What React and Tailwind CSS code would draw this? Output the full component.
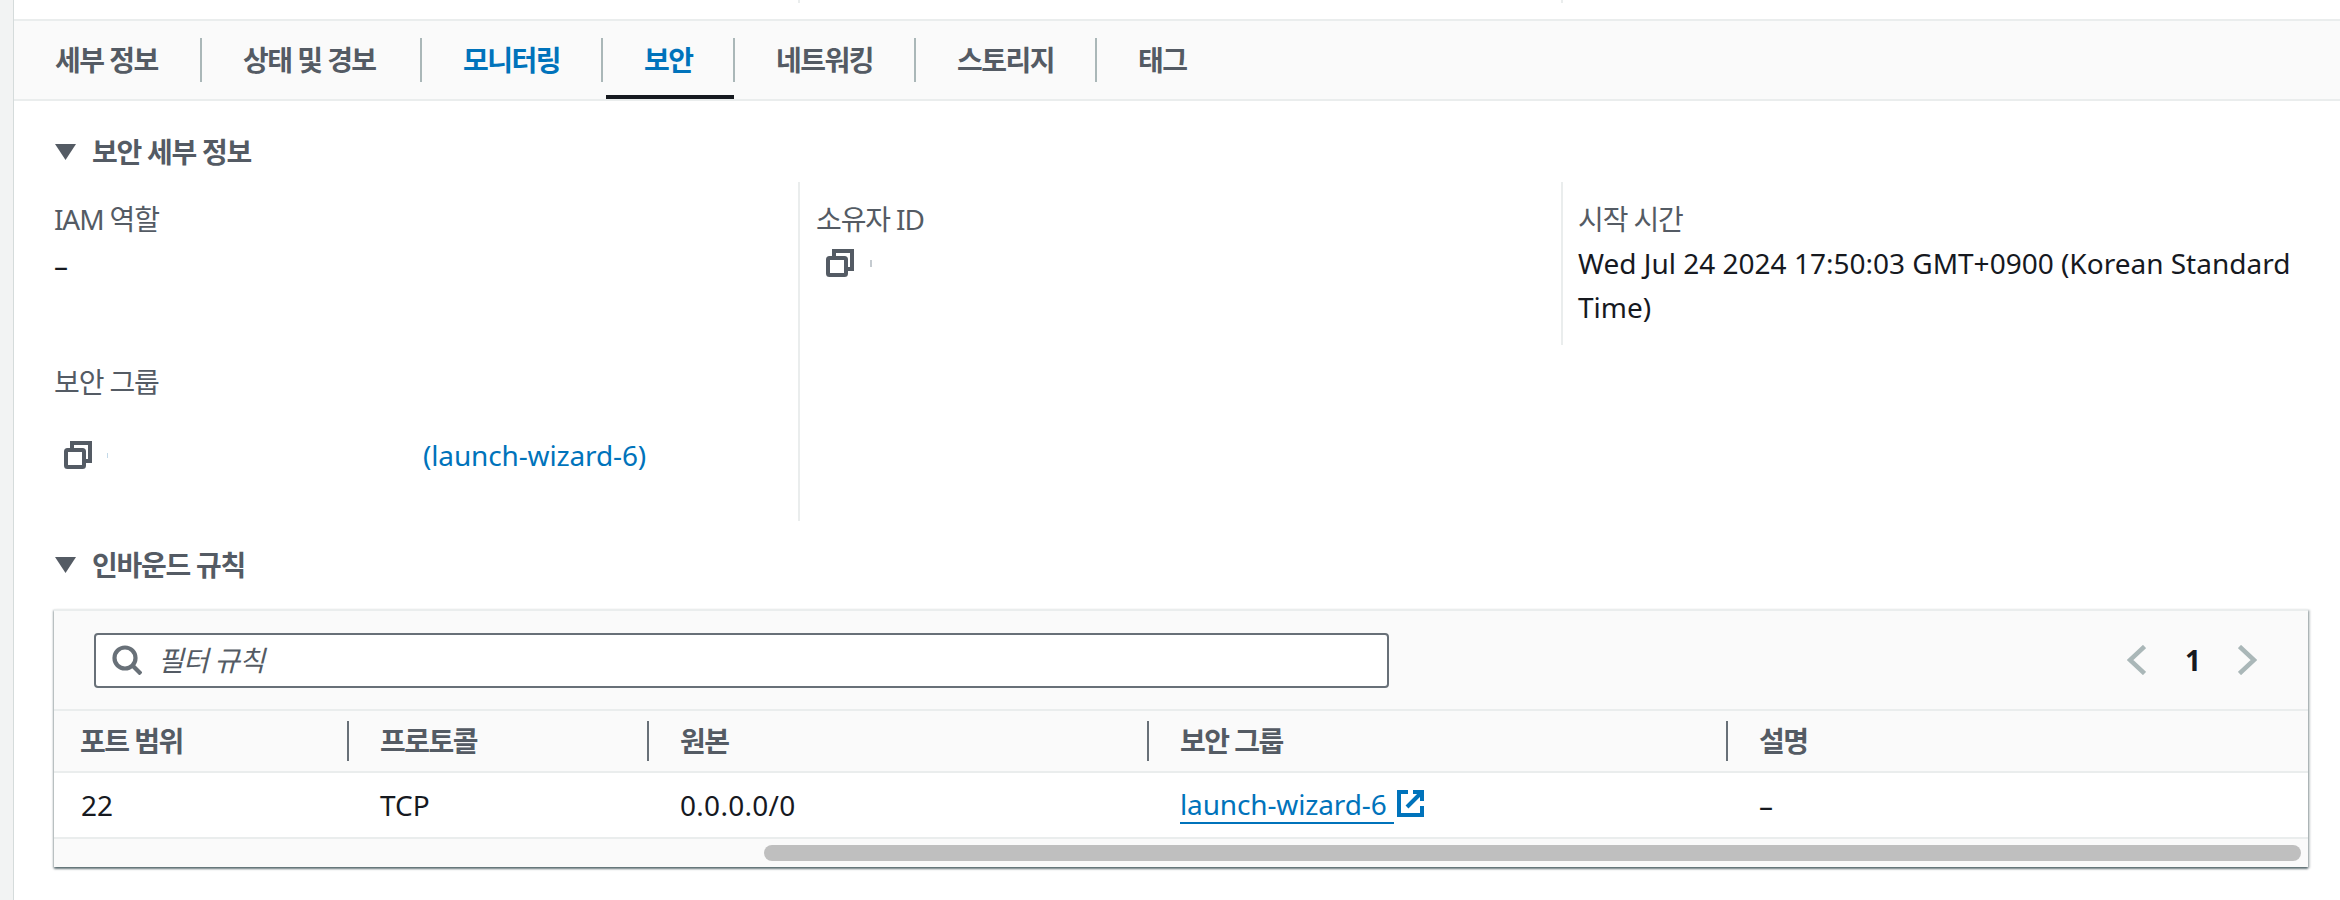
import React from 'react';

const tabs = [
  { label: '세부 정보', width: 'w-[188px]' },
  { label: '상태 및 경보', width: 'w-[220px]' },
  { label: '모니터링', width: 'w-[181px]', blue: true },
  { label: '보안', width: 'w-[132px]', blue: true, active: true },
  { label: '네트워킹', width: 'w-[181px]' },
  { label: '스토리지', width: 'w-[181px]' },
  { label: '태그', width: 'w-[132px]', last: true },
];

const Triangle = () => (
  <svg viewBox="0 0 21 16" className="w-[21px] h-[16px] shrink-0">
    <polygon points="0,0 21,0 10.5,16" fill="#545b64" />
  </svg>
);

const CopyIcon = () => (
  <svg viewBox="0 0 28 28" className="w-[28px] h-[28px] shrink-0" fill="none" stroke="#545b64" strokeWidth="4">
    <rect x="2" y="9" width="18" height="17" rx="1.5" />
    <path d="M8 8V2h18v18h-6" />
  </svg>
);

const Heading = ({ children }) => (
  <div className="flex items-center h-[40px] ml-[41px] gap-[16px]">
    <Triangle />
    <h2 className="text-[28px] font-bold text-[#545b64] tracking-[-0.045em]">{children}</h2>
  </div>
);

const Label = ({ children }) => (
  <div className="h-[40px] leading-[40px] text-[#545b64] tracking-[-0.04em]">{children}</div>
);

export default function App() {
  return (
    <div className="flex w-[2340px] h-[900px] bg-white overflow-hidden text-[28px] text-[#16191f] font-['Noto_Sans','Noto_Sans_CJK_KR',sans-serif]">
      <div className="w-[14px] shrink-0 bg-[#f2f3f3] border-r border-[#d5dbdb]" />
      <div className="flex-1 min-w-0">
        {/* top leftovers of the previous panel */}
        <div className="grid grid-cols-[784px_763px_1fr] h-[19px]">
          <div />
          <div className="h-[3px] border-l-2 border-[#eaeded]" />
          <div className="h-[3px] border-l-2 border-[#eaeded]" />
        </div>

        {/* tabs */}
        <div className="flex h-[82px] bg-[#fafafa] border-y-2 border-[#eaeded]">
          {tabs.map((tab) => (
            <div key={tab.label} className={`relative flex items-center h-full ${tab.width}`}>
              <div className={`flex items-center w-full h-[44px] pl-[41px] font-bold tracking-[-0.055em] whitespace-nowrap ${tab.last ? '' : 'border-r-2 border-[#aab7b8]'} ${tab.blue ? 'text-[#0073bb]' : 'text-[#545b64]'}`}>
                {tab.label}
              </div>
              {tab.active && <div className="absolute left-[3px] right-[1px] bottom-0 h-[4px] bg-[#16191f]" />}
            </div>
          ))}
        </div>

        {/* security details */}
        <div className="mt-[31px]">
          <Heading>보안 세부 정보</Heading>
        </div>
        <div className="grid grid-cols-[744px_763px_1fr] mt-[10px] ml-[40px] mr-[32px]">
          <div className="pt-[17px] pb-[44px]">
            <Label>IAM 역할</Label>
            <div className="mt-[6px] h-[40px] leading-[40px]">–</div>
            <div className="mt-[77px]">
              <Label>보안 그룹</Label>
            </div>
            <div className="flex items-center h-[44px] mt-[31px] ml-[10px]">
              <CopyIcon />
              <span className="ml-[15px] w-[1px] h-[5px] bg-[#c3d9e8]" />
              <a className="ml-[315px] text-[#0073bb] tracking-[-0.005em]">(launch-wizard-6)</a>
            </div>
          </div>
          <div className="border-l-2 border-[#eaeded] pt-[17px] pl-[16px]">
            <Label>소유자 ID</Label>
            <div className="flex items-center h-[44px] mt-[2px] ml-[10px]">
              <CopyIcon />
              <span className="ml-[16px] w-[2px] h-[7px] bg-[#c5cbd0]" />
            </div>
          </div>
          <div className="self-start border-l-2 border-[#eaeded] pt-[17px] pb-[16px] pl-[15px]">
            <Label>시작 시간</Label>
            <div className="mt-[2px] leading-[44px]">Wed Jul 24 2024 17:50:03 GMT+0900 (Korean Standard Time)</div>
          </div>
        </div>

        {/* inbound rules */}
        <div className="mt-[24px]">
          <Heading>인바운드 규칙</Heading>
        </div>
        <div className="mt-[24px] ml-[40px] mr-[32px] border-t-2 border-[#eaeded] bg-white shadow-[0_2px_2px_0_rgba(0,28,36,0.5),2px_1px_2px_0_rgba(0,28,36,0.2),-1px_1px_2px_0_rgba(0,28,36,0.2)]">
          <div className="flex items-center justify-between h-[100px] pl-[40px] pr-[51px] bg-[#fafafa] border-b-2 border-[#eaeded]">
            <div className="flex items-center w-[1295px] h-[55px] pl-[16px] bg-white border-2 border-[#687078] rounded-[4px]">
              <svg viewBox="0 0 30 30" className="w-[30px] h-[30px] shrink-0" fill="none" stroke="#687078" strokeWidth="4.2">
                <circle cx="13" cy="13" r="10.5" />
                <path d="M20.5 20.5 29 29" />
              </svg>
              <span className="ml-[16px] italic text-[#545b64] tracking-[-0.03em]">필터 규칙</span>
            </div>
            <div className="flex items-center">
              <svg viewBox="0 0 19 30" className="w-[19px] h-[30px]" fill="none" stroke="#aab7b8" strokeWidth="4.5">
                <path d="M17.5 1.5 3 15l14.5 13.5" />
              </svg>
              <span className="ml-[39px] w-[12px] font-bold leading-none">1</span>
              <svg viewBox="0 0 19 30" className="ml-[41px] w-[19px] h-[30px]" fill="none" stroke="#aab7b8" strokeWidth="4.5">
                <path d="M1.5 1.5 16 15 1.5 28.5" />
              </svg>
            </div>
          </div>

          <div className="grid grid-cols-[293px_300px_500px_579px_1fr] h-[62px] bg-[#fafafa] border-b-2 border-[#eaeded] font-bold text-[#545b64] tracking-[-0.055em]">
            <div className="flex items-center pl-[26px]">포트 범위</div>
            {['프로토콜', '원본', '보안 그룹', '설명'].map((col) => (
              <div key={col} className="flex items-center">
                <div className="w-[2px] h-[40px] bg-[#687078]" />
                <span className="ml-[31px]">{col}</span>
              </div>
            ))}
          </div>

          <div className="grid grid-cols-[293px_300px_500px_579px_1fr] h-[66px] border-b-2 border-[#eaeded]">
            <div className="flex items-center pl-[27px]">22</div>
            <div className="flex items-center pl-[33px]">TCP</div>
            <div className="flex items-center pl-[33px] tracking-[0.01em]">0.0.0.0/0</div>
            <div className="flex items-center pl-[33px]">
              <a className="w-[214px] text-[#0073bb] border-b-2 border-[#0073bb] leading-[36px] tracking-[-0.005em]">launch-wizard-6</a>
              <svg viewBox="0 0 27 27" className="ml-[3px] -mt-[4px] w-[27px] h-[27px]" fill="none" stroke="#0073bb" strokeWidth="4">
                <path d="M11 2H2v23h23v-9" />
                <path d="M16 2h9v9" />
                <path d="M25 2 10 17" />
              </svg>
            </div>
            <div className="flex items-center pl-[33px]">–</div>
          </div>

          <div className="h-[28px] pt-[6px] pl-[710px] pr-[7px] bg-[#fafafa]">
            <div className="h-[16px] rounded-full bg-[#bfbfbf]" />
          </div>
        </div>
      </div>
    </div>
  );
}
